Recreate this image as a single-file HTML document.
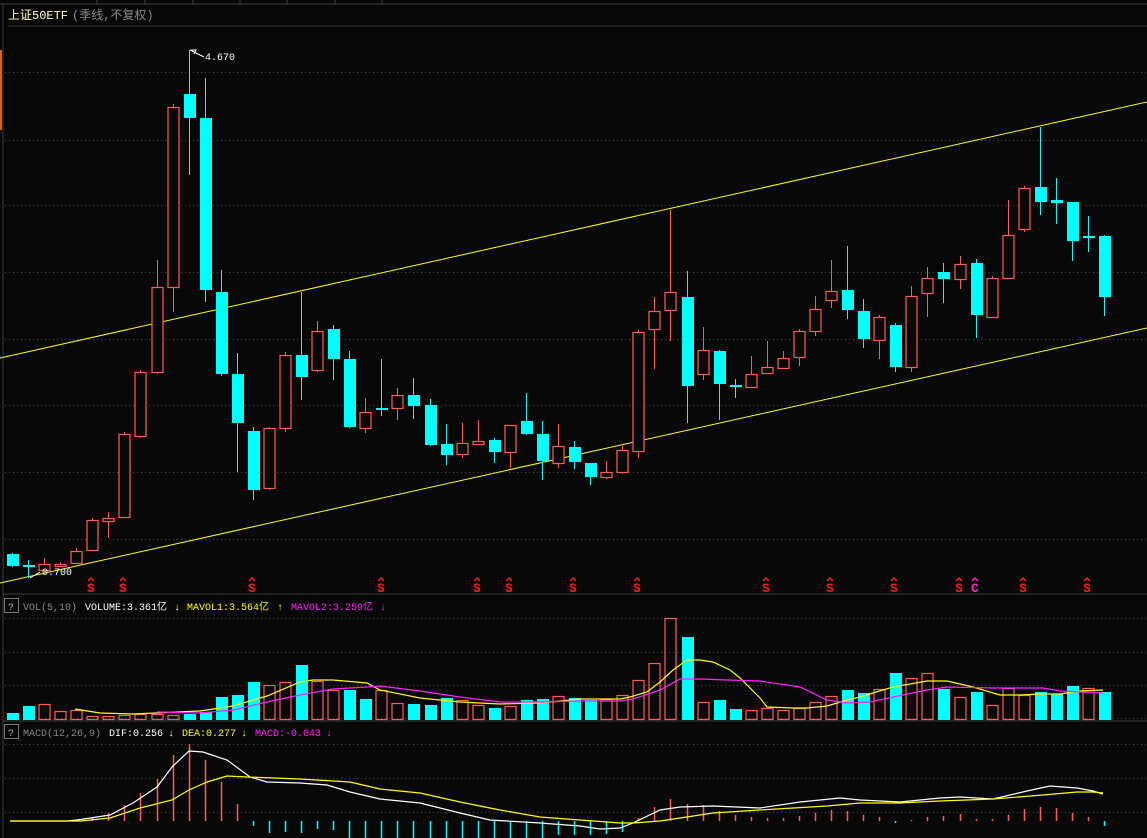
<!DOCTYPE html>
<html><head><meta charset="utf-8"><style>
html,body{margin:0;padding:0;background:#080808;width:1147px;height:838px;overflow:hidden}
svg{display:block}
text{font-family:"Liberation Mono","Noto Sans CJK SC",monospace;font-size:10px}
</style></head><body>
<svg id="s" width="1147" height="838" viewBox="0 0 1147 838" xmlns="http://www.w3.org/2000/svg">
<rect width="1147" height="838" fill="#080808"/>
<line x1="0" y1="4" x2="1147" y2="4" stroke="#3a3a3a"/>
<g stroke="#3a3a3a"><line x1="97" y1="0" x2="97" y2="4"/><line x1="145" y1="0" x2="145" y2="4"/><line x1="193" y1="0" x2="193" y2="4"/><line x1="240" y1="0" x2="240" y2="4"/><line x1="287" y1="0" x2="287" y2="4"/><line x1="335" y1="0" x2="335" y2="4"/><line x1="382" y1="0" x2="382" y2="4"/></g>
<line x1="3" y1="4" x2="3" y2="838" stroke="#3a3a3a"/>
<rect x="0" y="50" width="2" height="80" fill="#e0601a"/>
<line x1="8" y1="26" x2="1147" y2="26" stroke="#333"/>
<text x="8" y="19" fill="#ffffc0" style="font-size:12px">上证50ETF</text>
<text x="72" y="19" fill="#888" style="font-size:12px">(季线,不复权)</text>
<g id="grid" stroke="#4a4a4a" stroke-dasharray="1,3"></g>
<line x1="3" y1="594" x2="1147" y2="594" stroke="#3a3a3a"/>
<line x1="3" y1="721" x2="1147" y2="721" stroke="#3a3a3a"/>
<line x1="0" y1="358" x2="1147" y2="102" stroke="#ffff00" stroke-width="1"/>
<line x1="0" y1="583" x2="1147" y2="328" stroke="#ffff00" stroke-width="1"/>
<g id="c"></g>
<g fill="#fff" style="font-size:11px"><text x="205" y="60">4.670</text><text x="42" y="575">0.700</text></g>
<polyline points="190,50 204,57" stroke="#fff" fill="none"/>
<polyline points="190,50 196,50 194,54" stroke="#fff" fill="none"/>
<polyline points="40,572 30,578" stroke="#fff" fill="none"/>
<g id="sm" style="font-weight:bold;font-size:12px"></g>
<rect x="4.5" y="598.5" width="14" height="14" fill="none" stroke="#777"/>
<text x="8" y="610" fill="#aaa">?</text>
<text x="23" y="610" fill="#888">VOL(5,10)</text>
<text x="85" y="610" fill="#fff">VOLUME:3.361亿</text><text x="174" y="610" fill="#fff">↓</text>
<text x="187" y="610" fill="#ffff00">MAVOL1:3.564亿</text><text x="277" y="610" fill="#ffff00">↑</text>
<text x="291" y="610" fill="#ff22ff">MAVOL2:3.259亿</text><text x="380" y="610" fill="#ff22ff">↓</text>
<rect x="4.5" y="724.5" width="14" height="14" fill="none" stroke="#777"/>
<text x="8" y="736" fill="#aaa">?</text>
<text x="23" y="736" fill="#888">MACD(12,26,9)</text>
<text x="109" y="736" fill="#fff">DIF:0.256</text><text x="168" y="736" fill="#fff">↓</text>
<text x="182" y="736" fill="#ffff00">DEA:0.277</text><text x="241" y="736" fill="#ffff00">↓</text>
<text x="255" y="736" fill="#ff22ff">MACD:-0.043</text><text x="326" y="736" fill="#ff22ff">↓</text>
</svg>
<script>
var NS="http://www.w3.org/2000/svg";
function el(p,t,a){var e=document.createElementNS(NS,t);for(var k in a)e.setAttribute(k,a[k]);p.appendChild(e);return e;}
var g=document.getElementById('grid');
[72,140,205,272,339,405,472,539,618,652,685,718,744,778,812].forEach(function(y){el(g,'line',{x1:5,y1:y+.5,x2:1147,y2:y+.5});});
var C=[[0,554,566,553,567],[0,565,567,560,578],[1,564,570,558,571],[1,564,566,562,567],[1,551,563,548,564],[1,520,550,518,551],[1,518,521,512,538],[1,434,517,432,518],[1,372,436,370,438],[1,287,372,260,374],[1,107,287,104,312],[0,94,118,50,175],[0,118,290,78,302],[0,292,374,270,376],[0,374,423,353,472],[0,431,490,427,500],[1,428,488,427,490],[1,355,428,352,432],[0,355,377,292,400],[1,331,370,321,372],[0,329,359,325,380],[0,359,427,351,428],[1,412,428,398,433],[0,408,410,359,416],[1,395,408,388,420],[0,395,406,378,419],[0,405,445,399,446],[0,444,455,424,465],[1,443,454,423,458],[1,441,444,420,445],[0,440,452,438,463],[1,425,452,425,468],[0,421,434,393,435],[0,434,461,421,480],[1,446,463,424,468],[0,447,462,441,469],[0,463,477,463,485],[1,472,477,461,479],[1,450,472,446,474],[1,332,451,330,458],[1,311,329,297,369],[1,292,310,210,341],[0,297,386,271,423],[1,350,374,327,380],[0,351,384,350,420],[0,385,387,379,398],[1,374,387,356,388],[1,367,373,341,374],[1,358,368,351,369],[1,331,357,329,366],[1,309,331,296,336],[1,291,300,260,308],[0,290,310,246,319],[0,311,339,299,348],[1,317,340,315,359],[0,325,367,323,372],[1,296,367,286,372],[1,278,293,267,317],[0,272,279,263,303],[1,264,279,256,289],[0,263,315,259,338],[1,278,317,276,318],[1,235,278,200,278],[1,188,229,186,232],[0,187,202,127,215],[0,200,203,178,224],[0,202,241,202,261],[0,236,238,216,252],[0,236,297,235,316]];
var VC="00111111111000001101100110001101001001111101001111110010110101110001";
var VT=[713,706,704,711,710,716,716,715,714,714,715,714,712,697,695,682,685,682,665,681,690,690,699,690,703,704,705,698,700,705,708,706,700,699,696,698,700,699,695,680,663,618,637,702,700,709,710,708,710,708,702,696,690,693,689,673,678,673,689,697,692,705,688,695,692,694,686,688,692];
var M={5:817,6:813,7:805,8:793,9:779,10:755,11:744,12:760,13:782,14:804,15:826,16:833,17:832,18:833,19:829,20:830,34:835,35:835,36:835,37:834,38:832,39:818,40:807,41:799,42:804,43:805,44:811,45:815,46:817,47:818,48:818,49:816,50:813,51:810,52:811,53:815,54:817,55:823,56:820,57:817,58:816,59:814,60:819,61:819,62:815,63:809,64:807,65:808,66:813,67:817,68:826};
for(var i=21;i<34;i++)M[i]=840;
var cg=document.getElementById('c');
var RED="#ff5b5b",CY="#00ffff";
C.forEach(function(d,i){
 var x=Math.round(12+16.06*i);var col=d[0]?RED:CY;
 el(cg,'line',{x1:x+.5,y1:d[3],x2:x+.5,y2:d[4],stroke:col});
 var h=d[2]-d[1];
 if(d[0]){el(cg,'rect',{x:x-5,y:d[1]+.5,width:11,height:Math.max(h,1),fill:"#080808",stroke:col,'stroke-width':1.2});}
 else{el(cg,'rect',{x:x-5,y:d[1],width:12,height:Math.max(h,2),fill:col});}
 var vc=VC[i]=="1"?RED:CY;var vt=VT[i];
 if(VC[i]=="1")el(cg,'rect',{x:x-5,y:vt+.5,width:11,height:719-vt,fill:"none",stroke:vc,'stroke-width':1.2});
 else el(cg,'rect',{x:x-5,y:vt,width:12,height:720-vt,fill:vc});
 if(M[i]){var m=M[i];var up=m<821;el(cg,'line',{x1:x+.5,y1:up?m:821,x2:x+.5,y2:up?821:m,stroke:up?RED:CY,'stroke-width':1.5});}
});
function pl(pts,col){el(cg,'polyline',{points:pts,fill:'none',stroke:col,'stroke-width':1.2});}
pl("75,709 100,713 133,714 200,711 233,706 267,696 300,682 313,680 333,680 367,683 380,690 420,698 460,702 500,704 540,703 580,699 620,699 630,697 647,692 660,682 673,670 687,660 700,660 713,662 730,670 740,678 760,698 767,707 793,708 807,708 827,706 847,700 860,697 893,687 927,681 947,681 973,687 1000,695 1020,695 1040,694 1060,694 1080,691 1103,690","#ffff00");
pl("157,712 200,713 233,710 267,702 300,695 333,689 367,687 380,686 420,691 460,697 500,702 540,702 580,701 620,701 633,699 660,690 680,679 700,679 727,680 760,681 800,687 827,700 847,703 870,702 893,697 927,690 947,687 993,688 1043,688 1060,691 1103,693","#ff22ff");
pl("10,821 67,821 77,820 110,815 133,803 157,787 172,767 189,751 203,752 227,760 250,777 267,782 300,783 327,785 350,792 380,799 420,803 460,813 490,820 540,823 580,826 600,829 620,828 633,823 660,810 680,807 713,806 760,808 800,802 840,798 860,800 900,802 940,798 960,797 993,799 1027,791 1050,786 1077,788 1093,791 1103,794","#ffffff");
pl("10,821 80,821 110,818 140,808 172,800 189,790 207,782 227,776 247,777 300,779 350,782 380,789 420,793 460,802 500,810 540,817 580,820 620,823 633,823 660,821 680,818 713,813 760,810 827,806 860,803 900,803 940,801 993,799 1043,795 1077,792 1093,792 1103,793","#ffff00");
var sm=document.getElementById('sm');
[91,123,252,381,477,509,573,637,766,830,894,959,975,1023,1087].forEach(function(x){
 var c=x==975?"#ff22cc":"#ff1a1a";
 var t=el(sm,'text',{x:x-4,y:592,fill:c,style:"font-size:13px;font-weight:bold"});t.textContent=x==975?"C":"S";
 el(sm,'polyline',{points:(x-3)+",581 "+x+",578 "+(x+3)+",581",fill:'none',stroke:c,'stroke-width':1.5});
});
</script>
</body></html>
